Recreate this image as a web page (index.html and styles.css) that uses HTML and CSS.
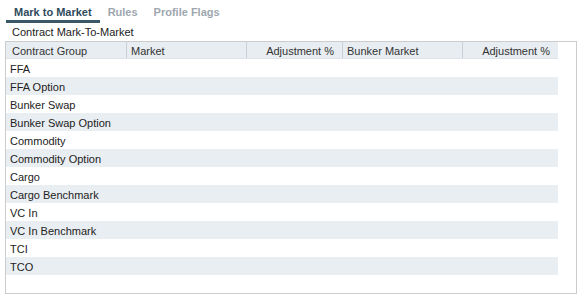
FILE: index.html
```html
<!DOCTYPE html>
<html>
<head>
<meta charset="utf-8">
<link rel="stylesheet" href="styles.css">
</head>
<body>
<div class="tabs">
  <div class="tab active">Mark to Market</div>
  <div class="tab">Rules</div>
  <div class="tab">Profile Flags</div>
</div>
<div class="title">Contract Mark-To-Market</div>
<div class="box">
  <div class="grid">
    <div class="hcell">Contract Group</div>
    <div class="hcell sep">Market</div>
    <div class="hcell sep right">Adjustment %</div>
    <div class="hcell sep">Bunker Market</div>
    <div class="hcell sep right">Adjustment %</div>
  </div>
  <div class="rows">
    <div class="row">FFA</div>
    <div class="row alt">FFA Option</div>
    <div class="row">Bunker Swap</div>
    <div class="row alt">Bunker Swap Option</div>
    <div class="row">Commodity</div>
    <div class="row alt">Commodity Option</div>
    <div class="row">Cargo</div>
    <div class="row alt">Cargo Benchmark</div>
    <div class="row">VC In</div>
    <div class="row alt">VC In Benchmark</div>
    <div class="row">TCI</div>
    <div class="row alt">TCO</div>
  </div>
</div>
</body>
</html>
```
FILE: styles.css
```css
html, body {
  margin: 0;
  padding: 0;
  background: #ffffff;
  font-family: "Liberation Sans", Arial, sans-serif;
  font-size: 11px;
  color: #222222;
}
.tabs {
  display: flex;
  padding-left: 6px;
  height: 23px;
}
.tab {
  font-weight: bold;
  font-size: 11px;
  line-height: 14px;
  padding: 5px 8px 1px 8px;
  color: #9ea7af;
  border-bottom: 3px solid transparent;
}
.tab.active {
  color: #2f4b5b;
  border-bottom-color: #3a5967;
}
.title {
  margin-top: 2px;
  padding-left: 12px;
  line-height: 14px;
  color: #222222;
}
.box {
  margin: 2px 0 0 5px;
  width: 570px;
  height: 251px;
  border: 1px solid #cccccc;
}
.grid {
  display: grid;
  grid-template-columns: 120px 120px 96px 120px 96px;
  width: 552px;
  background: #e8edf1;
  border-bottom: 1px solid #dde3e8;
}
.hcell {
  height: 15px;
  padding-top: 1px;
  line-height: 16px;
  padding-left: 6px;
  padding-right: 6px;
  color: #333333;
  white-space: nowrap;
}
.hcell.sep {
  border-left: 1px solid #c9d1d8;
  padding-left: 4px;
}
.hcell.right {
  text-align: right;
  padding-right: 8px;
}
.rows {
  width: 552px;
}
.row {
  height: 17px;
  padding-top: 1px;
  line-height: 18px;
  padding-left: 4px;
  color: #222222;
}
.row.alt {
  background: #e9eef2;
}
```
